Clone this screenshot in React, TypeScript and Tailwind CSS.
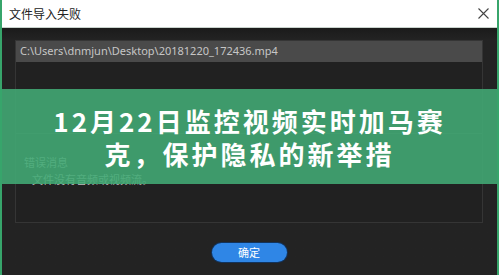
const cjk = "font-['Noto_Sans_CJK_SC','Noto_Sans',sans-serif]";

const CloseIcon = () => (
  <svg width="11" height="11" viewBox="0 0 11 11" fill="none" stroke="#444" strokeWidth="1.1">
    <path d="M0.5 0.5L10.5 10.5M10.5 0.5L0.5 10.5" />
  </svg>
);

/** Import-failed dialog with a green headline band across it. */
const App = () => (
  <div
    className={`relative flex h-[275px] w-[499px] flex-col overflow-hidden border-x-2 border-[#37a56b] bg-[#222222] ${cjk}`}
  >
    <div className="flex h-[28px] shrink-0 items-center justify-between border-b border-[#c9d3cd] bg-white pl-[7px] pr-[8px]">
      <span className="text-[12px] leading-none text-[#222]">文件导入失败</span>
      <CloseIcon />
    </div>

    <div className="flex flex-1 flex-col bg-gradient-to-b from-[#1b1b1b] to-[#232323] to-[12px] pl-[13px] pr-[14px] pt-[12px]">
      <div className="flex h-[183px] flex-col border border-[#353535] bg-[#212121]">
        <div className="flex h-[21px] items-center bg-[#4a4a4a] pl-[4px] font-['Noto_Sans',sans-serif] text-[11px] text-[#c6c6c6]">
          C:\Users\dnmjun\Desktop\20181220_172436.mp4
        </div>
        <div className="mt-[71px] flex-1 border-t border-[#3a3a3a] pt-[21px]">
          <p className="pl-[8px] text-[11px] leading-[14px] text-[#bdbdbd]">错误消息</p>
          <p className="mt-[3px] pl-[16px] text-[11px] leading-[14px] text-[#bdbdbd]">
            文件没有音频或视频流。
          </p>
        </div>
      </div>
      <div className="mt-[20px] flex justify-center">
        <button
          type="button"
          className="flex h-[19px] w-[75px] items-center justify-center rounded-full bg-[#2f86e6] text-[11px] leading-none text-white shadow-[0_0_0_1px_#12335c]"
        >
          确定
        </button>
      </div>
    </div>

    <div className="absolute left-0 right-0 top-[89px] flex h-[95px] items-center justify-center bg-[rgba(66,171,117,0.88)] px-[36px] text-center">
      <h1 className="text-[26px] font-bold leading-[33px] tracking-[3px] text-white">
        12月22日监控视频实时加马赛克，保护隐私的新举措
      </h1>
    </div>
  </div>
);

export default App;
